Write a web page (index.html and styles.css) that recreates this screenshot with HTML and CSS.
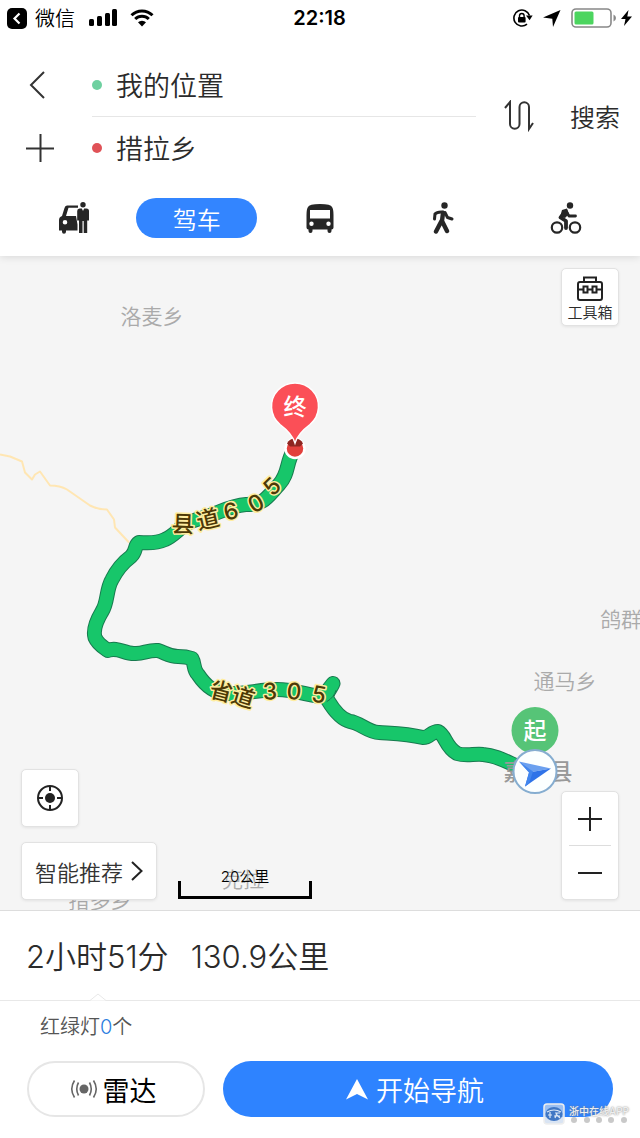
FILE: index.html
```html
<!DOCTYPE html>
<html lang="zh-CN">
<head>
    <meta charset="UTF-8">
    <meta name="viewport" content="width=device-width, initial-scale=1.0">
    <title>路线规划</title>
    <link rel="stylesheet" href="styles.css">
</head>
<body>
<div class="app">
    <header class="top">
        <div class="status-bar">
            <div class="status-left">
                <svg width="20" height="21" viewBox="0 0 20 21"><rect width="20" height="21" rx="5"/><path d="M12.500 5.500l-5 5 5 5" fill="none" stroke="#fff" stroke-width="2.200"/></svg>
                <a href="#">微信</a>
                <svg width="29" height="18" viewBox="0 0 29 18"><rect x="0" y="10" width="5" height="7" rx="1.500"/><rect x="8" y="7" width="5" height="10" rx="1.500"/><rect x="16" y="4" width="5" height="13" rx="1.500"/><rect x="23" y="0" width="5" height="17" rx="1.500"/></svg>
                <svg class="wifi" width="24" height="18" viewBox="0 0 24 18"><path d="M1.500 6.200a15 15 0 0 1 21 0M5.200 10a9.700 9.700 0 0 1 13.600 0" fill="none" stroke="#000" stroke-width="3"/><path d="M12 17.500l-4-4.200a5.800 5.800 0 0 1 8 0z"/></svg>
            </div>
            <span class="clock">22:18</span>
            <div class="status-right">
                <svg width="20" height="18" viewBox="0 0 20 18"><path d="M16.500 6.500A8 8 0 1 0 14 15.200" fill="none" stroke="#000" stroke-width="1.600"/><path d="M13 6.600h6.600l-3 4.600z"/><rect x="5" y="8" width="7.600" height="5.600" rx="1"/><path d="M6.500 8.500V6.800a2.300 2.300 0 0 1 4.600 0v1.700" fill="none" stroke="#000" stroke-width="1.400"/></svg>
                <svg width="18" height="17" viewBox="0 0 18 17"><path d="M17.500 0L10 17 9.300 8.700 0 7.500z"/></svg>
                <svg width="46" height="20" viewBox="0 0 46 20"><rect x="1" y="1" width="39" height="18" rx="4" fill="#fff" stroke="#888" stroke-width="1.600"/><rect x="3.500" y="3.500" width="19" height="13" rx="1.500" fill="#4cd55f"/><path d="M42.500 6.500v7q2.500-1 2.500-3.500t-2.500-3.500z" fill="#888"/></svg>
                <svg width="11" height="16" viewBox="0 0 11 16"><path d="M7.500 0L0 9h4.500L3 16l8-9.500H6.300z"/></svg>
            </div>
        </div>

        <form class="route-form">
            <div class="route-icons">
                <button type="button" aria-label="返回"><svg width="28" height="28" viewBox="0 0 28 28"><path d="M18 1L5 14l13 13"/></svg></button>
                <button type="button" aria-label="添加途经点"><svg width="28" height="28" viewBox="0 0 28 28"><path d="M14.500 0v28M0 14.500h28"/></svg></button>
            </div>
            <div class="route-fields">
                <label class="field"><i class="dot dot-start"></i><input type="text" value="我的位置" aria-label="起点"></label>
                <label class="field"><i class="dot dot-end"></i><input type="text" value="措拉乡" aria-label="终点"></label>
            </div>
            <button type="button" class="swap" aria-label="交换起终点"><svg width="30" height="32" viewBox="0 0 30 32"><path d="M1 8l5-6v22a4.500 4.500 0 0 0 9.500 0V7a4.700 4.700 0 0 1 9.500 0v22l4-6"/></svg></button>
            <button type="submit" class="search">搜索</button>
        </form>

        <nav class="modes">
            <button type="button" aria-label="打车">
                <svg width="30" height="32" viewBox="0 0 30 32"><path fill-rule="evenodd" d="M8 3.500h11v2.200H9.500L7 14h10l1.500 8.500v6H7v1.300a1.800 1.800 0 0 1-4 0v-1.300H0V18q0-3 3-4L5.500 6Q6 3.500 8 3.500zM6 18a2.300 2.300 0 1 0 0 4.600A2.300 2.300 0 0 0 6 18z"/><circle cx="24" cy="2.800" r="2.700"/><path d="M20.500 6.500h2.300L24 9l1.200-2.500h2.300q2.500 0 2.500 2.500v9.500h-1.800V31h-3.500V19h-1.200v12H20V18.500h-1.800V9q0-2.500 2.300-2.500z"/></svg>
            </button>
            <button type="button" class="active">驾车</button>
            <button type="button" aria-label="公交">
                <svg width="28" height="30" viewBox="0 0 28 30"><path fill-rule="evenodd" d="M2 4Q3 1 14 1t12 3q1.500 2 1.500 8v12.500q0 2-2 2V28a1.800 1.800 0 0 1-4 0v-1.500h-15V28a1.800 1.800 0 0 1-4 0v-1.500q-2 0-2-2V12Q.500 6 2 4zM4 7v8.500h20V7zM5.500 18.500a2.200 2.200 0 1 0 0 4.400 2.200 2.200 0 0 0 0-4.400zm17 0a2.200 2.200 0 1 0 0 4.400 2.200 2.200 0 0 0 0-4.400z"/></svg>
            </button>
            <button type="button" aria-label="步行">
                <svg width="22" height="32" viewBox="0 0 22 32"><circle cx="12.500" cy="3.500" r="3.200"/><path d="M11 11L10 19l5 10M9.500 19L4 29.500" fill="none" stroke="#262626" stroke-width="4.400" stroke-linecap="round" stroke-linejoin="round"/><path d="M11 10q-6-.500-8 2L2.500 17M13 10.500l2.500 5 4.500 1.500" fill="none" stroke="#262626" stroke-width="3" stroke-linecap="round" stroke-linejoin="round"/></svg>
            </button>
            <button type="button" aria-label="骑行">
                <svg width="32" height="32" viewBox="0 0 32 32"><circle cx="20" cy="3.500" r="3.200"/><g fill="none" stroke="#262626"><circle cx="7" cy="25.500" r="5.200" stroke-width="2.200"/><circle cx="25" cy="25.500" r="5.200" stroke-width="2.200"/><path d="M15 10l-4.500 5.500 5.500 3.500v7" stroke-width="3.800" stroke-linecap="round" stroke-linejoin="round"/><path d="M16 9l3 5h6.500" stroke-width="2.800" stroke-linecap="round" stroke-linejoin="round"/></g><path d="M12 8l5-1.500 2 5.500-4 4-5-1z"/></svg>
            </button>
        </nav>
    </header>

    <main class="map">
        <svg class="map-canvas" viewBox="0 256 640 655" preserveAspectRatio="xMidYMid slice">
            <path class="minor-road" d="M0 455L10 457 22 462 25 473 32 480 35 475 40 472 45 479 50 486Q60 486 67 490L90 506Q98 510 107 510L114 520 115 528 129 543"/>

            <g class="place">
                <text x="152" y="324">洛麦乡</text>
                <text x="621" y="627">鸽群</text>
                <text x="565" y="689">通马乡</text>
                <text x="100" y="908">措多乡</text>
                <text x="243" y="887">克拉</text>
            </g>

            <!-- same path drawn twice: dark edge, then green fill -->
            <g class="route">
                <path class="route-edge" d="M293 452C286 464 289 474 279 485C266 499 264 505 246 505C228 506 215 516 197 520C181 524 177 535 165 540C154 545 145 543 139 543C134 546 137 551 131 557Q119 566 112 580C106 590 108 603 102 612C96 622 93 631 95 638C98 645 104 648 108 651C117 647 124 654 134 654C143 655 148 650 158 651C165 653 169 657 178 657Q186 657 192 659C195 664 193 670 198 675C206 687 214 693 226 694C246 695 258 690 277 690C296 690 311 697 323 697L333 684C332 688 324 695 328 701C334 711 342 720 350 722C360 723 368 733 379 733C395 734 407 734 423 738C430 738 431 732 438 732C446 736 445 747 457 754C466 757 474 754 483 755C497 756 506 762 520 768"/>
                <path class="route-fill" d="M293 452C286 464 289 474 279 485C266 499 264 505 246 505C228 506 215 516 197 520C181 524 177 535 165 540C154 545 145 543 139 543C134 546 137 551 131 557Q119 566 112 580C106 590 108 603 102 612C96 622 93 631 95 638C98 645 104 648 108 651C117 647 124 654 134 654C143 655 148 650 158 651C165 653 169 657 178 657Q186 657 192 659C195 664 193 670 198 675C206 687 214 693 226 694C246 695 258 690 277 690C296 690 311 697 323 697L333 684C332 688 324 695 328 701C334 711 342 720 350 722C360 723 368 733 379 733C395 734 407 734 423 738C430 738 431 732 438 732C446 736 445 747 457 754C466 757 474 754 483 755C497 756 506 762 520 768"/>
                <path d="M336 691Q334 698 327 702" fill="none" stroke="#187a4f"/>
            </g>

            <g class="road-name">
                <text transform="translate(183 525) rotate(2)" y="8">县</text>
                <text transform="translate(208 520) rotate(-13)" y="8">道</text>
                <text transform="translate(231 512) rotate(-15)" y="8">6</text>
                <text transform="translate(256 504) rotate(-28)" y="8">0</text>
                <text transform="translate(272 487) rotate(-44)" y="8">5</text>
                <text transform="translate(221 692) rotate(14)" y="8">省</text>
                <text transform="translate(243 698) rotate(17)" y="8">道</text>
                <text transform="translate(270 692) rotate(-2)" y="8">3</text>
                <text transform="translate(294 692) rotate(5)" y="8">0</text>
                <text transform="translate(319 695) rotate(10)" y="8">5</text>
            </g>

            <text class="county" x="538" y="780">嘉黎县</text>

            <!-- destination pin -->
            <circle cx="295" cy="449" r="9.500" fill="#e2403c" stroke="#fff" stroke-width="2.500"/>
            <path d="M287 444a9 9 0 0 1 16 0l-3 3h-10z" fill="#8f2520"/>
            <path d="M295 443.500Q292 434 280 425A23.500 23.500 0 1 1 310 425Q298 434 295 443.500z" fill="#fb4f57" stroke="#fff" stroke-width="1.500"/>
            <text class="pin-text" x="295" y="415">终</text>

            <!-- start pin and current heading -->
            <circle cx="535" cy="731" r="23.500" fill="#56c477"/>
            <text class="pin-text" x="535" y="739">起</text>
            <circle cx="535" cy="772" r="21.500" fill="#fcffff" stroke="#86add0" stroke-width="2"/>
            <path d="M519 762L551 769 529 773z" fill="#6ba0ef"/>
            <path d="M551 769L525 787 529 773z" fill="#2f73e8"/>
            <path d="M519 762l10 11-4 14 4-3 4-12z" fill="#4286ee"/>
        </svg>

        <button type="button" class="card toolbox">
            <svg width="26" height="25" viewBox="0 0 26 25"><path d="M3 6h20q2 0 2 2v14q0 2-2 2H3q-2 0-2-2V8q0-2 2-2zM7 6V1.500h12V6M1 13.500h5.500m4 0h5m4 0H25M6.500 10.500h4v6h-4zM15.500 10.500h4v6h-4z"/></svg>
            工具箱
        </button>

        <div class="map-bottom">
            <div class="left-tools">
                <button type="button" class="card locate" aria-label="定位">
                    <svg width="28" height="28" viewBox="0 0 28 28"><circle cx="14" cy="14" r="12"/><path d="M14 2v5M14 21v5M2 14h5M21 14h5"/><circle cx="14" cy="14" r="5" fill="#222" stroke="none"/></svg>
                </button>
                <button type="button" class="card prefer">
                    智能推荐
                    <svg width="12" height="20" viewBox="0 0 12 20"><path d="M1 1l9.500 9L1 19"/></svg>
                </button>
            </div>
            <div class="scale">20公里</div>
            <div class="card zoom">
                <button type="button" aria-label="放大"><svg width="24" height="24" viewBox="0 0 24 24"><path d="M12 0v24M0 12h24"/></svg></button>
                <button type="button" aria-label="缩小"><svg width="24" height="24" viewBox="0 0 24 24"><path d="M0 12h24"/></svg></button>
            </div>
        </div>
    </main>

    <section class="sheet">
        <h1 class="summary"><span>2小时51分</span><span>130.9公里</span></h1>
        <div class="detail">
            <svg class="notch" width="16" height="8" viewBox="0 0 16 8"><path d="M0 7.500L8 1l8 6.500" fill="#fff" stroke="#e8e8e8"/></svg>
            <p>红绿灯<b>0</b>个</p>
        </div>
        <div class="actions">
            <button type="button" class="radar">
                <svg width="28" height="20" viewBox="0 0 28 20"><circle cx="14" cy="10" r="4.500" fill="#666"/><path d="M8.500 3.500Q5 10 8.500 16.500M19.500 3.500Q23 10 19.500 16.500M4.500 1.500Q-1 10 4.500 18.500M23.500 1.500Q29 10 23.500 18.500" fill="none" stroke="#666" stroke-width="1.600"/></svg>
                雷达
            </button>
            <button type="button" class="go">
                <svg width="22" height="21" viewBox="0 0 22 21"><path d="M11 0l11 20.500-11-5.500-11 5.500z" fill="#fff"/></svg>
                开始导航
            </button>
        </div>
        <div class="watermark">
            <svg width="22" height="22" viewBox="0 0 22 22"><rect x="1" y="1" width="20" height="20" rx="3" fill="#c9d8ee" fill-opacity=".7" stroke="#eee" stroke-width="1.500"/><ellipse cx="11" cy="11" rx="8.500" ry="7" fill="#4077c4"/><path d="M4 9q7-4 14 0M5 12h4M7 9v6M12 10h5M11 13h6M14 10l-2 5M14 12l3 3" fill="none" stroke="#dce8f6" stroke-width="1.200"/></svg>
            <div>浙中在线APP<span class="marks"><i></i><i></i><i></i><i></i><i></i></span></div>
        </div>
    </section>
</div>
</body>
</html>
```
FILE: styles.css
```css
* {
    box-sizing: border-box;
}

body {
    margin: 0;
    background: #fff;
    color: #2b2b2b;
    font-family: Inter, "Noto Sans CJK SC", sans-serif;
}

button,
input {
    margin: 0;
    padding: 0;
    border: 0;
    background: none;
    color: inherit;
    font: inherit;
    cursor: pointer;
}

svg {
    display: block;
    flex: none;
}

.app {
    display: flex;
    flex-direction: column;
    min-height: 100vh;
}

/* Header */
.top {
    position: relative;
    z-index: 1;
    background: #fff;
    box-shadow: 0 1px 8px rgba(0, 0, 0, 0.12);
}

.status-bar {
    display: grid;
    grid-template-columns: 1fr auto 1fr;
    align-items: center;
    height: 36px;
    padding: 0 8px 0 7px;
    color: #000;
}

.status-left,
.status-right {
    display: flex;
    align-items: center;
    gap: 8px;
}

.status-left a {
    margin-right: 6px;
    color: #000;
    font-family: "Noto Sans CJK SC", sans-serif;
    font-size: 20px;
    font-weight: 350;
    line-height: 24px;
    text-decoration: none;
}

.wifi {
    margin-left: 4px;
}

.status-right {
    justify-content: flex-end;
    gap: 10px;
}

.status-right svg:last-child {
    margin-left: -6px;
}

.clock {
    font-size: 20px;
    font-weight: 600;
}

.route-form {
    display: flex;
    align-items: center;
    height: 162px;
    padding: 0 20px 2px 26px;
}

.route-icons {
    width: 66px;
}

.route-icons button {
    display: flex;
    align-items: center;
    height: 63px;
}

.route-icons svg,
.swap svg {
    fill: none;
    stroke: #333;
    stroke-width: 2;
}

.route-fields {
    flex: 1;
    min-width: 0;
}

.field {
    display: flex;
    align-items: center;
    gap: 14px;
    height: 63px;
}

.field + .field {
    border-top: 1px solid #e6e6e6;
}

.field input {
    flex: 1;
    min-width: 0;
    font-family: "Noto Sans CJK SC", sans-serif;
    font-size: 27px;
    font-weight: 350;
    line-height: 40px;
}

.dot {
    width: 10px;
    height: 10px;
    border-radius: 50%;
}

.dot-start {
    background: #6ed0a0;
}

.dot-end {
    background: #e05257;
}

.swap {
    margin: 0 36px 0 28px;
}

.search {
    font-size: 25px;
    font-weight: 350;
}

.modes {
    display: grid;
    grid-template-columns: repeat(5, 1fr);
    padding: 0 12px 18px;
}

.modes button {
    display: flex;
    align-items: center;
    justify-content: center;
    height: 40px;
    margin: 0 1px;
    border-radius: 20px;
    font-size: 24px;
    font-weight: 350;
}

.modes svg {
    fill: #262626;
}

.modes .active {
    background: #3385ff;
    color: #fff;
}

/* Map */
.map {
    position: relative;
    display: flex;
    flex: 1;
    flex-direction: column;
    justify-content: space-between;
    min-height: 500px;
    padding: 12px 21px 10px;
    overflow: hidden;
    background: #f5f5f5;
}

.map-canvas {
    position: absolute;
    top: 0;
    left: 0;
    width: 100%;
    height: 100%;
}

.map text {
    text-anchor: middle;
}

.minor-road {
    fill: none;
    stroke: #ffe6b3;
    stroke-width: 2;
    stroke-linejoin: round;
}

.place {
    fill: #aaa;
    font-size: 21px;
    font-weight: 350;
}

.county {
    fill: #999;
    font-size: 23px;
    font-weight: 500;
}

.route path {
    fill: none;
    stroke-linecap: round;
    stroke-linejoin: round;
}

.route .route-edge {
    stroke: #187a4f;
    stroke-width: 15;
}

.route .route-fill {
    stroke: #17c66a;
    stroke-width: 13;
}

.road-name {
    fill: #4d3906;
    stroke: #ffeda0;
    stroke-width: 3;
    stroke-linejoin: round;
    paint-order: stroke;
    font-size: 23px;
    font-weight: 500;
}

.pin-text {
    fill: #fff;
    font-size: 23px;
    font-weight: 500;
}

.card {
    border: 1px solid #e2e2e2;
    border-radius: 5px;
    background: #fff;
    box-shadow: 0 1px 3px rgba(0, 0, 0, 0.08);
}

.card svg {
    fill: none;
    stroke: #222;
    stroke-width: 2;
}

.toolbox {
    position: relative;
    display: flex;
    flex-direction: column;
    align-items: center;
    align-self: flex-end;
    gap: 2px;
    width: 58px;
    height: 58px;
    padding-top: 7px;
    font-size: 15px;
    font-weight: 350;
    line-height: 20px;
}

.map-bottom {
    position: relative;
    display: flex;
    align-items: flex-end;
}

.left-tools {
    display: grid;
    gap: 15px;
}

.locate {
    display: grid;
    place-items: center;
    width: 58px;
    height: 58px;
}

.prefer {
    display: flex;
    align-items: center;
    gap: 8px;
    height: 58px;
    padding: 0 13px;
    color: #333;
    font-family: "Noto Sans CJK SC", sans-serif;
    font-size: 22px;
    font-weight: 350;
}

.scale {
    position: relative;
    width: 134px;
    height: 34px;
    margin: 0 0 1px 21px;
    color: #000;
    font-size: 15px;
    font-weight: 350;
    line-height: 24px;
    text-align: center;
}

/* the open-topped bar under the distance */
.scale::after {
    content: "";
    position: absolute;
    right: 0;
    bottom: 0;
    left: 0;
    height: 15px;
    border: solid #000;
    border-width: 0 3px 3px;
}

.zoom {
    display: grid;
    width: 58px;
    margin-left: auto;
    padding: 0 7px;
}

.zoom button {
    display: grid;
    place-items: center;
    height: 53px;
}

.zoom button + button {
    height: 54px;
    border-top: 1px solid #ddd;
}

/* Bottom sheet */
.sheet {
    position: relative;
    border-top: 1px solid #ddd;
    background: #fff;
}

.summary {
    display: flex;
    gap: 22px;
    margin: 0;
    padding: 24px 26px 21px;
    font-size: 31px;
    font-weight: 350;
    line-height: 44px;
}

.detail {
    position: relative;
    padding: 12px 40px 0;
    border-top: 1px solid #e8e8e8;
}

.notch {
    position: absolute;
    top: -8px;
    left: 90px;
}

.detail p {
    margin: 0;
    color: #555;
    font-size: 20px;
    font-weight: 350;
    line-height: 28px;
}

.detail b {
    color: #2b7de0;
    font-weight: 350;
}

.actions {
    display: grid;
    grid-template-columns: 178fr 390fr;
    gap: 18px;
    padding: 20px 27px 21px;
}

.actions button {
    display: flex;
    align-items: center;
    justify-content: center;
    gap: 8px;
    height: 56px;
    padding-right: 6px;
    border-radius: 28px;
    font-size: 27px;
}

.actions .radar {
    gap: 5px;
    border: 2px solid #e6e6e6;
    color: #000;
}

.actions .go {
    background: #2e83ff;
    color: #fff;
    font-weight: 350;
}

.watermark {
    position: absolute;
    right: 11px;
    bottom: 13px;
    display: flex;
    align-items: center;
    gap: 4px;
    color: #eee;
    font-size: 10px;
    font-weight: 500;
    line-height: 12px;
    text-shadow: 0 0 2px #777;
}

.marks {
    display: flex;
    justify-content: space-between;
    padding: 0 2px;
}

.marks i {
    width: 6px;
    height: 6px;
    border-radius: 50%;
    background: #bbb;
    opacity: 0.8;
}
```
